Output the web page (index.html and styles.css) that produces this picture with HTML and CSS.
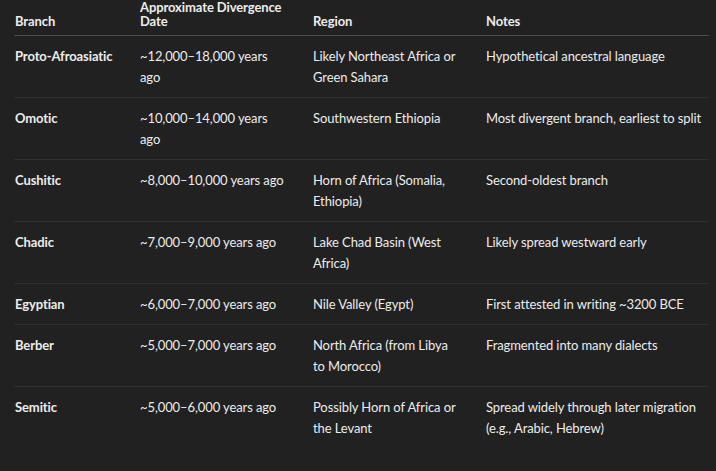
FILE: index.html
```html
<!DOCTYPE html>
<html lang="en">
<head>
<meta charset="utf-8">
<title>Afroasiatic branches</title>
<link rel="stylesheet" href="styles.css">
</head>
<body>
<table class="tbl">
  <colgroup>
    <col class="c1"><col class="c2"><col class="c3"><col class="c4">
  </colgroup>
  <thead>
    <tr><th>Branch</th><th>Approximate Divergence Date</th><th>Region</th><th>Notes</th></tr>
  </thead>
  <tbody>
    <tr><td class="name">Proto-Afroasiatic</td><td>~12,000–18,000 years ago</td><td>Likely Northeast Africa or Green Sahara</td><td>Hypothetical ancestral language</td></tr>
    <tr><td class="name">Omotic</td><td>~10,000–14,000 years ago</td><td>Southwestern Ethiopia</td><td>Most divergent branch, earliest to split</td></tr>
    <tr><td class="name">Cushitic</td><td>~8,000–10,000 years ago</td><td>Horn of Africa (Somalia, Ethiopia)</td><td>Second-oldest branch</td></tr>
    <tr><td class="name">Chadic</td><td>~7,000–9,000 years ago</td><td>Lake Chad Basin (West Africa)</td><td>Likely spread westward early</td></tr>
    <tr><td class="name">Egyptian</td><td>~6,000–7,000 years ago</td><td>Nile Valley (Egypt)</td><td>First attested in writing ~3200 BCE</td></tr>
    <tr><td class="name">Berber</td><td>~5,000–7,000 years ago</td><td>North Africa (from Libya to Morocco)</td><td>Fragmented into many dialects</td></tr>
    <tr><td class="name">Semitic</td><td>~5,000–6,000 years ago</td><td>Possibly Horn of Africa or the Levant</td><td>Spread widely through later migration (e.g., Arabic, Hebrew)</td></tr>
  </tbody>
</table>
</body>
</html>
```
FILE: styles.css
```css
html, body {
  margin: 0;
  padding: 0;
  background: #212121;
}
body {
  color: #ececec;
  font-family: Lato, "Noto Sans", sans-serif;
  font-size: 13px;
  letter-spacing: -0.1px;
}
.tbl {
  margin-left: 14px;
  width: 695px;
  table-layout: fixed;
  border-collapse: collapse;
}
.c1 { width: 125px; }
.c2 { width: 173px; }
.c3 { width: 173px; }
.c4 { width: 224px; }
th {
  text-align: left;
  font-weight: 700;
  line-height: 13.6px;
  vertical-align: bottom;
  padding: 1px 4px 7px 1px;
  border-bottom: 1px solid #4a4a4a;
}
td {
  vertical-align: top;
  line-height: 21px;
  padding: 10px 28px 9px 1px;
  border-bottom: 1px solid #303030;
}
td:first-child { padding-right: 8px; }
td:last-child { padding-right: 2px; }
tbody tr:last-child td { border-bottom: none; }
.name { font-weight: 700; }
```
